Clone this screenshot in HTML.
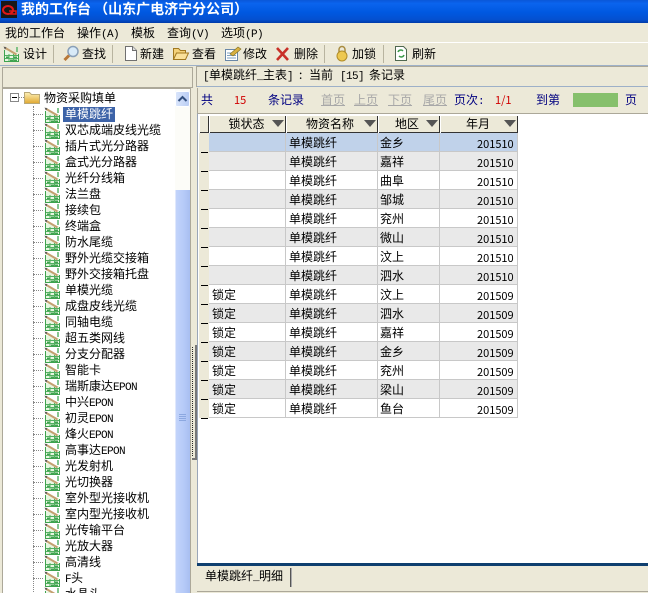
<!DOCTYPE html>
<html lang="zh"><head><meta charset="utf-8"><style>
html,body{margin:0;padding:0;background:#ece9d8}
#p{position:relative;width:648px;height:593px;overflow:hidden;background:#ece9d8;font:12px/16px "WenQuanYi Zen Hei","Noto Sans CJK SC",sans-serif;color:#000}
#p div{position:absolute;white-space:nowrap}
.t{height:16px;line-height:16px}
.t b{font:11px/16px "Liberation Mono",monospace;letter-spacing:-.6px}
.h{background:#ece9d8;box-shadow:inset 1px 1px 0 #fff,inset -1px -1px 0 #333;height:18px;top:115px;line-height:18px;text-align:center;padding-right:2px;box-sizing:border-box}
.h i{position:absolute;right:2px;top:5px;width:0;height:0;border-left:6px solid transparent;border-right:6px solid transparent;border-top:7px solid #555}
svg{position:absolute;overflow:visible}
.d{width:10px;height:0;border-top:1px dotted #888;left:30px}
</style></head><body><div id="p">
<svg width="0" height="0"><defs>
<linearGradient id="fg" x1="0" y1="0" x2="0" y2="1"><stop offset="0" stop-color="#fdf0b8"/><stop offset="1" stop-color="#e0a830"/></linearGradient>
<g id="g"><path d="M1 4.500h6l8 3v8H1z" fill="#e6f6e0"/><path d="M1.500 4v11.500h14V8" fill="none" stroke="#3fa34f"/><path d="M2 9.500h13M2 12.500h13M6 8v7M10.500 8v7" stroke="#52b060"/><path d="M3 10.500h2.500V12H3zM7 13.500h3V15H7zM11 13.500h3V15h-3zM11 10.500h3V12h-3z" fill="#3fa34f"/><path d="M1.500 1.500l12 7" stroke="#c4a070" stroke-width="2"/><path d="M14 1v5" stroke="#5cb46a" stroke-width="1.500"/><path d="M.5 .5l3 1-1.500 2z" fill="#555"/></g>
</defs></svg>

<!-- title bar -->
<div style="left:0;top:0;width:648px;height:23px;background:linear-gradient(#0a57d8 0,#0a64ee 15%,#0058e0 55%,#0450d0 85%,#003aa8 100%)"></div>
<div style="left:1px;top:1px;width:16px;height:17px;background:#181818"></div>
<svg style="left:1px;top:2px" width="16" height="16"><ellipse cx="7" cy="8" rx="5" ry="4" fill="none" stroke="#e01818" stroke-width="2"/><path d="M8 9h7v3H9" fill="none" stroke="#e01818" stroke-width="1.500"/></svg>
<div class="t" style="left:21px;top:0;color:#fff;font-weight:bold;font-size:14px;line-height:18px;white-space:pre">我的工作台 （山东广电济宁分公司）</div>

<!-- menu -->
<div style="left:0;top:23px;width:648px;height:19px;background:#ece9d8;border-bottom:1px solid #fff"></div>
<div class="t" style="left:5px;top:25px">我的工作台</div>
<div class="t" style="left:77px;top:25px">操作<b>(A)</b></div>
<div class="t" style="left:131px;top:25px">模板</div>
<div class="t" style="left:167px;top:25px">查询<b>(V)</b></div>
<div class="t" style="left:221px;top:25px">选项<b>(P)</b></div>

<!-- toolbar -->
<div style="left:0;top:43px;width:648px;height:22px;background:#ece9d8;border-bottom:1px solid #9db0c8"></div>
<svg style="left:3px;top:46px" width="17" height="17"><use href="#g"/></svg>
<div class="t" style="left:23px;top:46px">设计</div>
<div style="left:53px;top:45px;width:1px;height:18px;background:#b8b4a0"></div>
<svg style="left:63px;top:45px" width="17" height="17"><circle cx="10" cy="6.500" r="5" fill="#d8eaf8" stroke="#8aa0b8" stroke-width="1.500"/><path d="M6 10.500L1.500 15" stroke="#b87838" stroke-width="3"/></svg>
<div class="t" style="left:82px;top:46px">查找</div>
<div style="left:112px;top:45px;width:1px;height:18px;background:#b8b4a0"></div>
<svg style="left:123px;top:45px" width="16" height="17"><path d="M2.500 1.500h7l4 4v10h-11z" fill="#fff" stroke="#707070"/><path d="M9.500 1.500v4h4" fill="#ddd" stroke="#707070"/></svg>
<div class="t" style="left:140px;top:46px">新建</div>
<svg style="left:172px;top:45px" width="18" height="17"><path d="M1.500 14.500v-11h5l2 2h5v3" fill="#f4d27a" stroke="#a07820"/><path d="M1.500 14.500l3-6.500h12l-3 6.500z" fill="#fae19a" stroke="#a07820"/></svg>
<div class="t" style="left:192px;top:46px">查看</div>
<svg style="left:224px;top:45px" width="18" height="17"><rect x="1.500" y="4.500" width="12" height="11" fill="#fff" stroke="#6a88a8"/><path d="M3 8h9M3 10.500h9M3 13h9" stroke="#7ea0c0"/><path d="M6 9l8-7 3 2-8 7z" fill="#d8b040" stroke="#807020" stroke-width=".6"/></svg>
<div class="t" style="left:243px;top:46px">修改</div>
<svg style="left:275px;top:46px" width="16" height="16"><path d="M2 2l11 12M13 2L2 14" stroke="#c83028" stroke-width="2.600"/></svg>
<div class="t" style="left:294px;top:46px">删除</div>
<div style="left:324px;top:45px;width:1px;height:18px;background:#b8b4a0"></div>
<svg style="left:335px;top:45px" width="14" height="17"><path d="M4 8V4.500a3 3 0 0 1 6 0V8" fill="none" stroke="#a88c40" stroke-width="1.500"/><ellipse cx="7" cy="11" rx="5" ry="5" fill="#edc850" stroke="#b08c28"/></svg>
<div class="t" style="left:352px;top:46px">加锁</div>
<div style="left:383px;top:45px;width:1px;height:18px;background:#b8b4a0"></div>
<svg style="left:393px;top:45px" width="16" height="17"><path d="M2.500 1.500h8l3 3v11h-11z" fill="#fff" stroke="#506850"/><path d="M5 7a3 3 0 0 1 5-1M11 10a3 3 0 0 1-5 1" fill="none" stroke="#3c9a48" stroke-width="1.500"/></svg>
<div class="t" style="left:412px;top:46px">刷新</div>

<!-- left panel -->
<div style="left:2px;top:67px;width:189px;height:19px;background:#ece9d8;border:1px solid #aca899"></div>
<div style="left:2px;top:88px;width:187px;height:505px;background:#fff;border:1px solid #aca899;border-bottom:0;overflow:hidden">
<div style="left:30px;top:17px;width:0;height:490px;border-left:1px dotted #888"></div>
<div style="left:7px;top:4px;width:7px;height:7px;border:1px solid #888;background:#fff"></div>
<div style="left:9px;top:8px;width:5px;height:1px;background:#000"></div>
<div style="left:16px;top:8px;width:5px;border-top:1px dotted #888"></div>
<svg style="left:21px;top:2px" width="16" height="13"><path d="M.5 12.500v-11h5l2 2h8v9z" fill="url(#fg)" stroke="#b8a878"/></svg>
<div class="t" style="left:41px;top:1px">物资采购填单</div>
<div style="left:60px;top:18px;width:52px;height:15px;background:#3d63a8"></div>
<div class="d" style="top:25px"></div><div class="t" style="left:62px;top:17px;color:#fff">单模跳纤</div><svg style="left:41px;top:18px" width="17" height="16"><use href="#g"/></svg>
<div class="d" style="top:41px"></div><div class="t" style="left:62px;top:33px">双芯成端皮线光缆</div><svg style="left:41px;top:34px" width="17" height="16"><use href="#g"/></svg>
<div class="d" style="top:57px"></div><div class="t" style="left:62px;top:49px">插片式光分路器</div><svg style="left:41px;top:50px" width="17" height="16"><use href="#g"/></svg>
<div class="d" style="top:73px"></div><div class="t" style="left:62px;top:65px">盒式光分路器</div><svg style="left:41px;top:66px" width="17" height="16"><use href="#g"/></svg>
<div class="d" style="top:89px"></div><div class="t" style="left:62px;top:81px">光纤分线箱</div><svg style="left:41px;top:82px" width="17" height="16"><use href="#g"/></svg>
<div class="d" style="top:105px"></div><div class="t" style="left:62px;top:97px">法兰盘</div><svg style="left:41px;top:98px" width="17" height="16"><use href="#g"/></svg>
<div class="d" style="top:121px"></div><div class="t" style="left:62px;top:113px">接续包</div><svg style="left:41px;top:114px" width="17" height="16"><use href="#g"/></svg>
<div class="d" style="top:137px"></div><div class="t" style="left:62px;top:129px">终端盒</div><svg style="left:41px;top:130px" width="17" height="16"><use href="#g"/></svg>
<div class="d" style="top:153px"></div><div class="t" style="left:62px;top:145px">防水尾缆</div><svg style="left:41px;top:146px" width="17" height="16"><use href="#g"/></svg>
<div class="d" style="top:169px"></div><div class="t" style="left:62px;top:161px">野外光缆交接箱</div><svg style="left:41px;top:162px" width="17" height="16"><use href="#g"/></svg>
<div class="d" style="top:185px"></div><div class="t" style="left:62px;top:177px">野外交接箱托盘</div><svg style="left:41px;top:178px" width="17" height="16"><use href="#g"/></svg>
<div class="d" style="top:201px"></div><div class="t" style="left:62px;top:193px">单模光缆</div><svg style="left:41px;top:194px" width="17" height="16"><use href="#g"/></svg>
<div class="d" style="top:217px"></div><div class="t" style="left:62px;top:209px">成盘皮线光缆</div><svg style="left:41px;top:210px" width="17" height="16"><use href="#g"/></svg>
<div class="d" style="top:233px"></div><div class="t" style="left:62px;top:225px">同轴电缆</div><svg style="left:41px;top:226px" width="17" height="16"><use href="#g"/></svg>
<div class="d" style="top:249px"></div><div class="t" style="left:62px;top:241px">超五类网线</div><svg style="left:41px;top:242px" width="17" height="16"><use href="#g"/></svg>
<div class="d" style="top:265px"></div><div class="t" style="left:62px;top:257px">分支分配器</div><svg style="left:41px;top:258px" width="17" height="16"><use href="#g"/></svg>
<div class="d" style="top:281px"></div><div class="t" style="left:62px;top:273px">智能卡</div><svg style="left:41px;top:274px" width="17" height="16"><use href="#g"/></svg>
<div class="d" style="top:297px"></div><div class="t" style="left:62px;top:289px">瑞斯康达<b>EPON</b></div><svg style="left:41px;top:290px" width="17" height="16"><use href="#g"/></svg>
<div class="d" style="top:313px"></div><div class="t" style="left:62px;top:305px">中兴<b>EPON</b></div><svg style="left:41px;top:306px" width="17" height="16"><use href="#g"/></svg>
<div class="d" style="top:329px"></div><div class="t" style="left:62px;top:321px">初灵<b>EPON</b></div><svg style="left:41px;top:322px" width="17" height="16"><use href="#g"/></svg>
<div class="d" style="top:345px"></div><div class="t" style="left:62px;top:337px">烽火<b>EPON</b></div><svg style="left:41px;top:338px" width="17" height="16"><use href="#g"/></svg>
<div class="d" style="top:361px"></div><div class="t" style="left:62px;top:353px">高事达<b>EPON</b></div><svg style="left:41px;top:354px" width="17" height="16"><use href="#g"/></svg>
<div class="d" style="top:377px"></div><div class="t" style="left:62px;top:369px">光发射机</div><svg style="left:41px;top:370px" width="17" height="16"><use href="#g"/></svg>
<div class="d" style="top:393px"></div><div class="t" style="left:62px;top:385px">光切换器</div><svg style="left:41px;top:386px" width="17" height="16"><use href="#g"/></svg>
<div class="d" style="top:409px"></div><div class="t" style="left:62px;top:401px">室外型光接收机</div><svg style="left:41px;top:402px" width="17" height="16"><use href="#g"/></svg>
<div class="d" style="top:425px"></div><div class="t" style="left:62px;top:417px">室内型光接收机</div><svg style="left:41px;top:418px" width="17" height="16"><use href="#g"/></svg>
<div class="d" style="top:441px"></div><div class="t" style="left:62px;top:433px">光传输平台</div><svg style="left:41px;top:434px" width="17" height="16"><use href="#g"/></svg>
<div class="d" style="top:457px"></div><div class="t" style="left:62px;top:449px">光放大器</div><svg style="left:41px;top:450px" width="17" height="16"><use href="#g"/></svg>
<div class="d" style="top:473px"></div><div class="t" style="left:62px;top:465px">高清线</div><svg style="left:41px;top:466px" width="17" height="16"><use href="#g"/></svg>
<div class="d" style="top:489px"></div><div class="t" style="left:62px;top:481px"><b>F</b>头</div><svg style="left:41px;top:482px" width="17" height="16"><use href="#g"/></svg>
<div class="d" style="top:505px"></div><div class="t" style="left:62px;top:497px">水晶头</div><svg style="left:41px;top:498px" width="17" height="16"><use href="#g"/></svg>
<!-- scrollbar -->
<div style="left:172px;top:0;width:15px;height:505px;background:#fcfcf8"></div>
<div style="left:172px;top:2px;width:15px;height:16px;background:linear-gradient(90deg,#dbe6fb,#b8ccf4);border-radius:2px;box-shadow:inset 0 0 0 1px #fff"></div>
<svg style="left:174px;top:6px" width="11" height="8"><path d="M1.500 6l4-4 4 4" fill="none" stroke="#33507f" stroke-width="2"/></svg>
<div style="left:172px;top:101px;width:15px;height:404px;background:linear-gradient(90deg,#c4d5fb,#b5caf8 60%,#a8bef0);box-shadow:inset 1px 0 0 #e0e8fc"></div>
<div style="left:176px;top:325px;width:7px;height:1px;background:#8ca8e0;box-shadow:0 2px 0 #8ca8e0,0 4px 0 #8ca8e0,0 6px 0 #8ca8e0"></div>
</div>
<div style="left:190px;top:88px;width:1px;height:505px;background:#aca899"></div>

<!-- splitter -->
<div style="left:192px;top:345px;width:3px;height:113px;background:#ece9d8;border-right:2px solid #777;border-bottom:2px solid #777"></div>
<div style="left:192px;top:347px;width:0;height:109px;border-left:1px dotted #222"></div>

<!-- right header -->
<div style="left:196px;top:66px;width:452px;height:19px;background:#ece9d8;border:1px solid #aca899;border-right:0"></div>
<div class="t" style="left:203px;top:67px"><b>[</b></div>
<div class="t" style="left:209px;top:67px">单模跳纤</div>
<div class="t" style="left:257px;top:67px"><b>_</b></div>
<div class="t" style="left:263px;top:67px">主表</div>
<div class="t" style="left:287px;top:67px"><b>]</b></div>
<div class="t" style="left:299px;top:67px">:</div>
<div class="t" style="left:309px;top:67px">当前</div>
<div class="t" style="left:340px;top:67px"><b>[15]</b></div>
<div class="t" style="left:369px;top:67px">条记录</div>
<div style="left:197px;top:86px;width:451px;height:1px;background:#9db0c8"></div>

<!-- pager -->
<div style="left:197px;top:88px;width:1px;height:25px;background:#aca899"></div>
<div class="t" style="left:201px;top:92px;color:#000080">共</div>
<div class="t" style="left:234px;top:92px;color:#d00000;font-size:11px">15</div>
<div class="t" style="left:268px;top:92px;color:#000080">条记录</div>
<div class="t" style="left:321px;top:92px;color:#a8a8a8;text-decoration:underline">首页</div>
<div class="t" style="left:354px;top:92px;color:#a8a8a8;text-decoration:underline">上页</div>
<div class="t" style="left:388px;top:92px;color:#a8a8a8;text-decoration:underline">下页</div>
<div class="t" style="left:423px;top:92px;color:#a8a8a8;text-decoration:underline">尾页</div>
<div class="t" style="left:454px;top:92px;color:#000080">页次<b>:</b></div>
<div class="t" style="left:495px;top:92px;color:#d00000;font-size:11px">1/1</div>
<div class="t" style="left:536px;top:92px;color:#000080">到第</div>
<div style="left:573px;top:93px;width:45px;height:14px;background:#86c06c"></div>
<div class="t" style="left:625px;top:92px;color:#000080">页</div>

<!-- grid area -->
<div style="left:197px;top:113px;width:451px;height:453px;background:#fff;border-top:1px solid #aca899;border-left:1px solid #9aa6b8;box-sizing:border-box"></div>
<div class="h" style="left:199px;width:10px;padding:0"></div>
<div class="h" style="left:209px;width:77px">锁状态<i></i></div>
<div class="h" style="left:286px;width:92px;padding-right:4px">物资名称<i></i></div>
<div class="h" style="left:378px;width:62px;padding-right:4px">地区<i></i></div>
<div class="h" style="left:440px;width:78px">年月<i></i></div>

<div style="left:199px;top:133px;width:10px;height:285px;background:#ece9d8"></div>
<div style="left:201px;top:134px;width:7px;height:285px;background:repeating-linear-gradient(#ece9d8 0,#ece9d8 18px,#000 18px,#000 19px)"></div>

<div style="left:209px;top:133px;width:309px;height:19px;background:#c0d2ea"></div>
<div style="left:209px;top:152px;width:309px;height:19px;background:#e9e9e9"></div>
<div style="left:209px;top:190px;width:309px;height:19px;background:#e9e9e9"></div>
<div style="left:209px;top:228px;width:309px;height:19px;background:#e9e9e9"></div>
<div style="left:209px;top:266px;width:309px;height:19px;background:#e9e9e9"></div>
<div style="left:209px;top:304px;width:309px;height:19px;background:#e9e9e9"></div>
<div style="left:209px;top:342px;width:309px;height:19px;background:#e9e9e9"></div>
<div style="left:209px;top:380px;width:309px;height:19px;background:#e9e9e9"></div>
<div style="left:209px;top:133px;width:309px;height:285px;background:repeating-linear-gradient(transparent 0,transparent 18px,#c8c8c8 18px,#c8c8c8 19px)"></div>
<div style="left:285px;top:133px;width:1px;height:285px;background:#c8c8c8"></div>
<div style="left:377px;top:133px;width:1px;height:285px;background:#c8c8c8"></div>
<div style="left:439px;top:133px;width:1px;height:285px;background:#c8c8c8"></div>
<div style="left:517px;top:133px;width:1px;height:285px;background:#c8c8c8"></div>

<div class="t" style="left:289px;top:135px">单模跳纤</div><div class="t" style="left:380px;top:135px">金乡</div><div class="t" style="left:477px;top:136px;font-size:11px">201510</div>
<div class="t" style="left:289px;top:154px">单模跳纤</div><div class="t" style="left:380px;top:154px">嘉祥</div><div class="t" style="left:477px;top:155px;font-size:11px">201510</div>
<div class="t" style="left:289px;top:173px">单模跳纤</div><div class="t" style="left:380px;top:173px">曲阜</div><div class="t" style="left:477px;top:174px;font-size:11px">201510</div>
<div class="t" style="left:289px;top:192px">单模跳纤</div><div class="t" style="left:380px;top:192px">邹城</div><div class="t" style="left:477px;top:193px;font-size:11px">201510</div>
<div class="t" style="left:289px;top:211px">单模跳纤</div><div class="t" style="left:380px;top:211px">兖州</div><div class="t" style="left:477px;top:212px;font-size:11px">201510</div>
<div class="t" style="left:289px;top:230px">单模跳纤</div><div class="t" style="left:380px;top:230px">微山</div><div class="t" style="left:477px;top:231px;font-size:11px">201510</div>
<div class="t" style="left:289px;top:249px">单模跳纤</div><div class="t" style="left:380px;top:249px">汶上</div><div class="t" style="left:477px;top:250px;font-size:11px">201510</div>
<div class="t" style="left:289px;top:268px">单模跳纤</div><div class="t" style="left:380px;top:268px">泗水</div><div class="t" style="left:477px;top:269px;font-size:11px">201510</div>
<div class="t" style="left:212px;top:287px">锁定</div><div class="t" style="left:289px;top:287px">单模跳纤</div><div class="t" style="left:380px;top:287px">汶上</div><div class="t" style="left:477px;top:288px;font-size:11px">201509</div>
<div class="t" style="left:212px;top:306px">锁定</div><div class="t" style="left:289px;top:306px">单模跳纤</div><div class="t" style="left:380px;top:306px">泗水</div><div class="t" style="left:477px;top:307px;font-size:11px">201509</div>
<div class="t" style="left:212px;top:325px">锁定</div><div class="t" style="left:289px;top:325px">单模跳纤</div><div class="t" style="left:380px;top:325px">嘉祥</div><div class="t" style="left:477px;top:326px;font-size:11px">201509</div>
<div class="t" style="left:212px;top:344px">锁定</div><div class="t" style="left:289px;top:344px">单模跳纤</div><div class="t" style="left:380px;top:344px">金乡</div><div class="t" style="left:477px;top:345px;font-size:11px">201509</div>
<div class="t" style="left:212px;top:363px">锁定</div><div class="t" style="left:289px;top:363px">单模跳纤</div><div class="t" style="left:380px;top:363px">兖州</div><div class="t" style="left:477px;top:364px;font-size:11px">201509</div>
<div class="t" style="left:212px;top:382px">锁定</div><div class="t" style="left:289px;top:382px">单模跳纤</div><div class="t" style="left:380px;top:382px">梁山</div><div class="t" style="left:477px;top:383px;font-size:11px">201509</div>
<div class="t" style="left:212px;top:401px">锁定</div><div class="t" style="left:289px;top:401px">单模跳纤</div><div class="t" style="left:380px;top:401px">鱼台</div><div class="t" style="left:477px;top:402px;font-size:11px">201509</div>

<!-- bottom tabs -->
<div style="left:197px;top:563px;width:451px;height:3px;background:#0f3f6f"></div>
<div style="left:197px;top:566px;width:451px;height:27px;background:#ece9d8"></div>
<div style="left:290px;top:568px;width:1px;height:19px;background:#555;box-shadow:1px 0 0 #aaa"></div>
<div class="t" style="left:205px;top:568px">单模跳纤<b>_</b>明细</div>
<div style="left:197px;top:591px;width:451px;height:1px;background:#aca899"></div>
</div></body></html>
